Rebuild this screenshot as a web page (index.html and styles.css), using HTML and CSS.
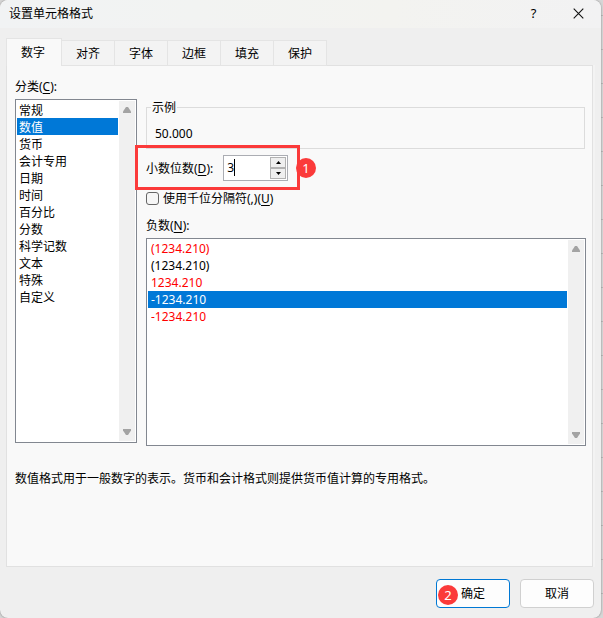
FILE: index.html
```html
<!DOCTYPE html>
<html lang="zh-CN">
<head>
<meta charset="utf-8">
<title>设置单元格格式</title>
<link rel="stylesheet" href="styles.css">
</head>
<body>
<main class="dialog">
  <header class="titlebar">
    <h1 class="title">设置单元格格式</h1>
    <button class="caption-button" type="button">?</button>
    <button class="caption-button" type="button" aria-label="关闭">
      <svg width="11" height="11" viewBox="0 0 11 11"><path d="M.7.7l9.6 9.6M10.3.7L.7 10.3" stroke="#111" stroke-width="1.1" fill="none"/></svg>
    </button>
  </header>

  <nav class="tabs" role="tablist">
    <button class="tab tab-active" type="button" role="tab" aria-selected="true">数字</button>
    <button class="tab" type="button" role="tab">对齐</button>
    <button class="tab" type="button" role="tab">字体</button>
    <button class="tab" type="button" role="tab">边框</button>
    <button class="tab" type="button" role="tab">填充</button>
    <button class="tab" type="button" role="tab">保护</button>
  </nav>

  <section class="panel">
    <label class="list-label" for="category">分类(<u>C</u>):</label>
    <div class="columns">
      <div class="listbox listbox-category">
        <select id="category" class="list" size="12">
          <option>常规</option>
          <option selected>数值</option>
          <option>货币</option>
          <option>会计专用</option>
          <option>日期</option>
          <option>时间</option>
          <option>百分比</option>
          <option>分数</option>
          <option>科学记数</option>
          <option>文本</option>
          <option>特殊</option>
          <option>自定义</option>
        </select>
        <div class="scrollbar">
          <svg width="8" height="6" viewBox="0 0 8 6"><path d="M3 0h2l3 4.500V6H0V4.500z" fill="#a3a3a3"/></svg>
          <svg width="8" height="6" viewBox="0 0 8 6"><path d="M3 6h2l3-4.500V0H0v1.500z" fill="#a3a3a3"/></svg>
        </div>
      </div>

      <div class="options">
        <fieldset class="sample">
          <legend>示例</legend>
          <output>50.000</output>
        </fieldset>

        <div class="decimals">
          <label for="decimals">小数位数(<u>D</u>):</label>
          <div class="spinner">
            <input id="decimals" class="spinner-input" type="text" value="3">
            <span class="caret"></span>
            <div class="spinner-buttons">
              <button type="button" aria-label="增加"><svg width="5" height="3" viewBox="0 0 5 3"><path d="M2.500 0L5 3H0z"/></svg></button>
              <button type="button" aria-label="减少"><svg width="5" height="3" viewBox="0 0 5 3"><path d="M2.500 3L5 0H0z"/></svg></button>
            </div>
          </div>
          <span class="highlight"></span>
          <span class="badge badge-decimals">1</span>
        </div>

        <label class="separator"><input class="checkbox" type="checkbox"><span>使用千位分隔符(,)(<u>U</u>)</span></label>

        <label class="list-label" for="negative">负数(<u>N</u>):</label>
        <div class="listbox listbox-negative">
          <select id="negative" class="list" size="5">
            <option class="red">(1234.210)</option>
            <option>(1234.210)</option>
            <option class="red">1234.210</option>
            <option selected>-1234.210</option>
            <option class="red">-1234.210</option>
          </select>
          <div class="scrollbar">
            <svg width="8" height="6" viewBox="0 0 8 6"><path d="M3 0h2l3 4.500V6H0V4.500z" fill="#a3a3a3"/></svg>
            <svg width="8" height="6" viewBox="0 0 8 6"><path d="M3 6h2l3-4.500V0H0v1.500z" fill="#a3a3a3"/></svg>
          </div>
        </div>
      </div>
    </div>
    <p class="description">数值格式用于一般数字的表示。货币和会计格式则提供货币值计算的专用格式。</p>
  </section>

  <footer class="actions">
    <button class="action action-primary" type="button">确定<span class="badge badge-confirm">2</span></button>
    <button class="action" type="button">取消</button>
  </footer>
</main>
</body>
</html>
```
FILE: styles.css
```css
* {
  box-sizing: border-box;
}

body,
button,
input,
select {
  margin: 0;
  font-family: "Noto Sans", "Noto Sans CJK SC", sans-serif;
  font-size: 12px;
  line-height: 17px;
  color: #000;
}

body {
  padding-right: 2px;
  background: repeating-linear-gradient(#d6d6d6 0 15px, #b8b8b8 15px 16px, #d6d6d6 16px 34px);
}

u {
  text-underline-offset: 2px;
}

.dialog {
  display: flex;
  flex-direction: column;
  min-height: 100vh;
  overflow: hidden;
  border-radius: 8px;
  background: #efefef;
  box-shadow: 0 0 2px #777;
}

.titlebar {
  display: flex;
  align-items: center;
  height: 28px;
  padding: 0 0 2px 9px;
  background: linear-gradient(90deg, #f1f3f4, #f3f3f0 65%, #f2f2f3);
}

.title {
  flex: 1;
  margin: 0;
  font-size: 12px;
  font-weight: 400;
}

.caption-button {
  display: flex;
  align-items: center;
  justify-content: center;
  width: 45px;
  height: 26px;
  padding: 0;
  border: 0;
  background: none;
  font-size: 13px;
}

.tabs {
  position: relative;
  z-index: 1;
  display: flex;
  align-items: flex-end;
  margin: 10px 0 -1px 6px;
}

.tab {
  width: 53px;
  height: 26px;
  padding: 0;
  border: 1px solid #e4e4e4;
  border-left: 0;
  background: #f3f3f3;
}

.tab-active {
  width: 56px;
  height: 28px;
  padding-right: 2px;
  border-left: 1px solid #e4e4e4;
  border-bottom: 0;
  background: #f9f9f9;
}

.panel {
  flex: 1;
  margin: 0 8px 0 6px;
  padding: 12px 6px 20px 8px;
  border: 1px solid #e1e1e1;
  background: #f9f9f9;
  box-shadow: 2px 0 #f3f3f3;
}

.list-label {
  display: block;
  margin-bottom: 4px;
}

.columns {
  display: grid;
  grid-template-columns: 122px 1fr;
  gap: 9px;
  align-items: start;
}

.listbox {
  display: flex;
  padding: 1px;
  border: 1px solid #828790;
  background: #fff;
}

.listbox-category {
  height: 344px;
}

.listbox-negative {
  height: 208px;
}

.list {
  flex: 1;
  min-width: 0;
  height: 100%;
  padding: 0;
  overflow: hidden;
  border: 0;
  border-radius: 0;
  outline: 0;
  background: #fff;
}

.list option {
  height: 17px;
  min-height: 17px;
  padding: 0 2px;
  line-height: 15px;
}

.listbox-negative option {
  padding: 0 3px;
}

.list option:checked {
  background-image: linear-gradient(#0078d7, #0078d7);
  -webkit-text-fill-color: #fff;
}

.list .red {
  color: #f00;
}

.scrollbar {
  display: flex;
  flex-direction: column;
  align-items: center;
  justify-content: space-between;
  width: 16px;
  margin-left: 1px;
  padding: 6px 0;
  background: #f0f0f0;
}

.sample {
  margin: 0 1px 0 0;
  padding: 9px 8px 6px;
  border: 1px solid #dcdcdc;
}

.sample legend {
  margin-left: -4px;
  padding: 0 1px;
}

.sample output {
  display: block;
}

.decimals {
  position: relative;
  display: flex;
  align-items: center;
  gap: 10px;
  margin-top: 6px;
}

.spinner {
  position: relative;
  display: flex;
  width: 65px;
  height: 26px;
  border: 1px solid #abadb3;
  background: #fff;
}

.spinner-input {
  flex: 1;
  min-width: 0;
  padding: 0 3px 2px;
  border: 0;
  outline: 0;
  background: none;
}

.caret {
  position: absolute;
  top: 3px;
  left: 10px;
  width: 1px;
  height: 17px;
  background: #000;
}

.spinner-buttons {
  display: flex;
  flex-direction: column;
  width: 17px;
  padding: 1px 1px 1px 0;
}

.spinner-buttons button {
  display: flex;
  flex: 1;
  align-items: center;
  justify-content: center;
  padding: 0;
  border: 1px solid #b2b2b2;
  background: #efefef;
}

.highlight {
  position: absolute;
  top: -10px;
  left: -11px;
  width: 165px;
  height: 45px;
  border: 3px solid #fb3a3a;
  pointer-events: none;
}

.badge {
  position: absolute;
  width: 20px;
  height: 20px;
  border-radius: 50%;
  background: #fb3a3a;
  color: #fff;
  font-size: 13px;
  line-height: 20px;
  text-align: center;
}

.badge-decimals {
  top: 3px;
  left: 150px;
}

.badge-confirm {
  top: 5px;
  left: 1px;
}

.separator {
  display: flex;
  align-items: center;
  gap: 4px;
  margin: 9px 0 10px;
}

.checkbox {
  appearance: none;
  width: 13px;
  height: 13px;
  margin: 0;
  border: 1px solid #666;
  border-radius: 3px;
  background: #f6f6f6;
}

.description {
  margin: 24px 0 0;
}

.actions {
  display: flex;
  justify-content: flex-end;
  gap: 10px;
  padding: 12px 7px 10px;
}

.action {
  position: relative;
  width: 74px;
  height: 29px;
  padding: 0;
  border: 1px solid #d0d0d0;
  border-radius: 4px;
  background: #fdfdfd;
}

.action-primary {
  border-color: #0078d4;
}
```
